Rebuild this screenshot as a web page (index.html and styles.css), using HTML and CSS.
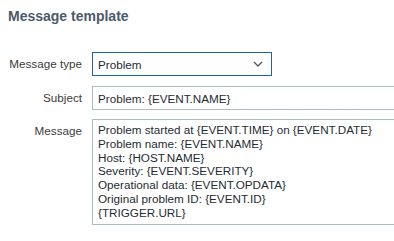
FILE: index.html
```html
<!DOCTYPE html>
<html lang="en">

<head>
	<meta charset="UTF-8">
	<meta name="viewport" content="width=device-width, initial-scale=1.0">
	<title>Message template</title>
	<link rel="stylesheet" href="styles.css">
</head>

<body>
	<div class="container">
		<h2 class="title">Message template</h2>

		<form class="template-form">
			<div class="row">
				<label for="type">Message type</label>
				<div class="select">
					<span>Problem</span>
					<svg class="chevron" width="10" height="6" viewBox="0 0 10 6">
						<path d="M1 1 L5 5 L9 1" fill="none" stroke="#555" stroke-width="1.3" />
					</svg>
				</div>
			</div>
			<div class="row">
				<label for="subject">Subject</label>
				<input type="text" id="subject" class="field" value="Problem: {EVENT.NAME}" />
			</div>
			<div class="row row-area">
				<label for="message">Message</label>
				<div class="field area" id="message">Problem started at {EVENT.TIME} on {EVENT.DATE}
Problem name: {EVENT.NAME}
Host: {HOST.NAME}
Severity: {EVENT.SEVERITY}
Operational data: {EVENT.OPDATA}
Original problem ID: {EVENT.ID}
{TRIGGER.URL}</div>
			</div>
		</form>
	</div>
</body>

</html>
```

FILE: styles.css
```css
* {
	margin: 0;
	padding: 0;
	box-sizing: border-box;
}

body {
	background-color: #fff;
	font-family: "Liberation Sans", Arial, sans-serif;
	font-size: 11.7px;
	color: #1f2c33;
	overflow: hidden;
}

.container {
	width: 440px;
	padding: 8px 0 0 8px;
}

.title {
	font-size: 14px;
	font-weight: bold;
	color: #4b5a68;
	line-height: 16px;
}

.template-form {
	margin-top: 28px;
	display: flex;
	flex-direction: column;
	gap: 10px;
}

.row {
	display: flex;
	align-items: flex-start;
}

.row-area {
	margin-top: -1px;
}

.row>label {
	width: 84px;
	padding-right: 10px;
	text-align: right;
	line-height: 24px;
	white-space: nowrap;
	color: #3c3c3c;
	flex-shrink: 0;
}

.select {
	width: 180px;
	height: 24px;
	padding: 0 8px 0 5px;
	border: 1px solid #1f65a6;
	display: flex;
	align-items: center;
	justify-content: space-between;
	color: #1f2c33;
}

.field {
	width: 320px;
	height: 24px;
	padding: 0 5px;
	border: 1px solid #acbbc2;
	font-family: inherit;
	font-size: 11.7px;
	color: #1f2c33;
	outline: none;
}

.area {
	height: 106px;
	padding: 3px 5px;
	line-height: 13.8px;
	white-space: pre;
}
```
